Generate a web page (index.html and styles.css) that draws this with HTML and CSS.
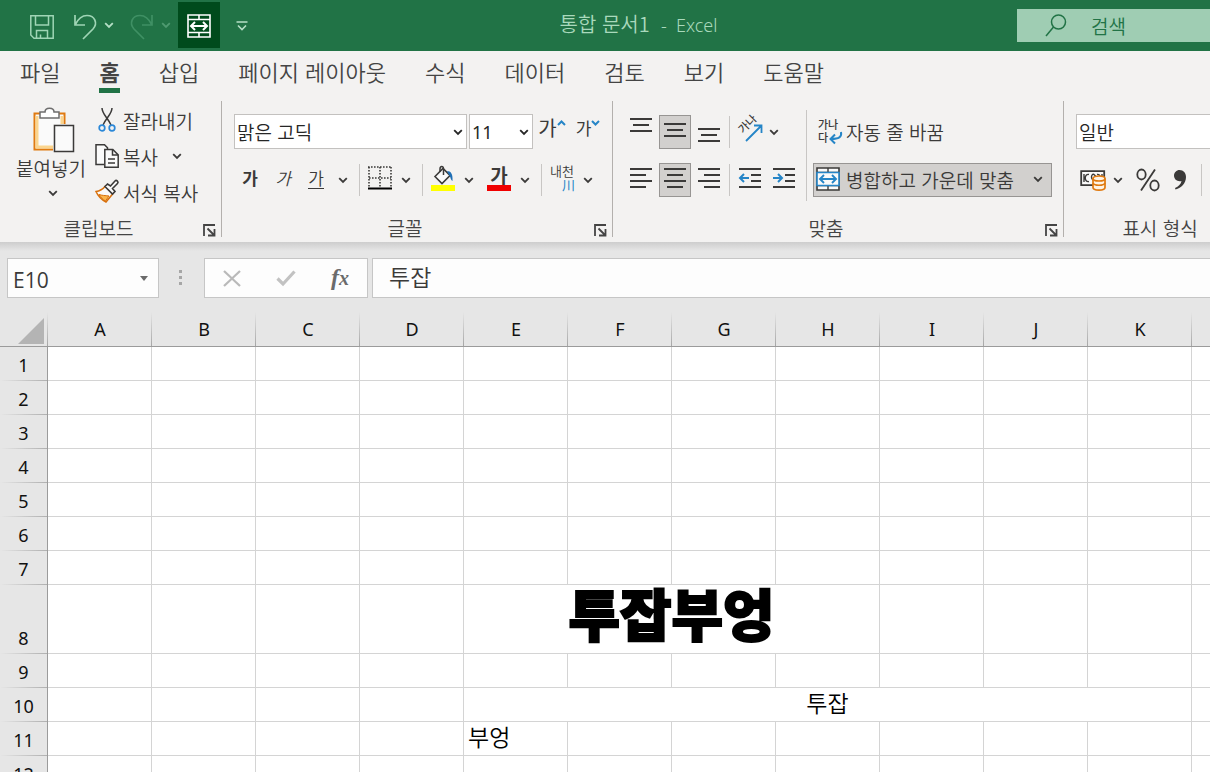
FILE: index.html
```html
<!DOCTYPE html>
<html lang="ko">
<head>
<meta charset="utf-8">
<title>통합 문서1 - Excel</title>
<link rel="stylesheet" href="styles.css">
</head>
<body>
<svg class="symbols" aria-hidden="true">
  <symbol id="chev" viewBox="0 0 10 10"><path d="M1.2 3.2 5 7l3.800-3.800" fill="none" stroke="currentColor" stroke-width="1.8"/></symbol>
  <symbol id="launch" viewBox="0 0 13 13"><path d="M1 12V1h11M4.500 4.500l6 6M11.500 5v6.500H5" fill="none" stroke="currentColor" stroke-width="1.800"/></symbol>
</svg>
<div class="app">
  <header class="titlebar">
    <div class="quick">
      <button class="q save" aria-label="저장"><svg width="24" height="24" viewBox="0 0 24 24" fill="none" stroke="currentColor" stroke-width="1.500"><path d="M.8.8h22.400v22.400H4L.8 20zM5.500.8v9.200h13V.8M6.500 23v-7.500h11V23M10.500 23v-3.500"/></svg></button>
      <button class="q undo" aria-label="실행 취소"><svg width="24" height="26" viewBox="0 0 24 26" fill="none" stroke="currentColor" stroke-width="1.700"><path d="M2 1v10h10M2 11C5 5 9 1.500 14 1.500c8 0 11 8 6 13.500L10 25"/></svg></button>
      <button class="q chevbtn" aria-label="실행 취소 목록"><svg width="10" height="10"><use href="#chev"/></svg></button>
      <button class="q redo" aria-label="다시 실행"><svg width="24" height="26" viewBox="0 0 24 26" fill="none" stroke="currentColor" stroke-width="1.700"><path d="M22 1v10H12M22 11C19 5 15 1.500 10 1.500c-8 0-11 8-6 13.500L14 25"/></svg></button>
      <button class="q chevbtn dim" aria-label="다시 실행 목록"><svg width="10" height="10"><use href="#chev"/></svg></button>
      <button class="q merged" aria-label="병합하고 가운데 맞춤"><svg width="24" height="24" viewBox="0 0 24 24" fill="none" stroke="currentColor" stroke-width="1.600"><path d="M1 1h22v22H1zM1 5.500h22M1 18.500h22M12 1v4.500M12 18.500V23"/><path d="M4.500 12h15M8 8l-4 4 4 4M16 8l4 4-4 4" stroke-width="2"/></svg></button>
      <button class="q custom" aria-label="빠른 실행 도구 모음 사용자 지정"><svg width="12" height="10" viewBox="0 0 12 10" fill="none" stroke="currentColor" stroke-width="1.600"><path d="M.5 1h11M2 4.500l4 4 4-4"/></svg></button>
    </div>
    <div class="doc">통합 문서1 &nbsp;<span>-&nbsp; Excel</span></div>
    <label class="search"><svg width="22" height="23" viewBox="0 0 22 23" fill="none" stroke="currentColor" stroke-width="1.500"><circle cx="13.500" cy="8" r="7"/><path d="M8.500 13 1 22"/></svg><input type="text" placeholder="검색" aria-label="검색"></label>
  </header>

  <nav class="tabs">
    <a href="#">파일</a><a href="#" class="on">홈</a><a href="#">삽입</a><a href="#">페이지 레이아웃</a><a href="#">수식</a><a href="#">데이터</a><a href="#">검토</a><a href="#">보기</a><a href="#">도움말</a>
  </nav>

  <div class="ribbon">
    <section class="group">
      <div class="body clip">
        <button class="paste">
          <svg class="board" width="42" height="46" viewBox="0 0 42 46" fill="none"><path d="M1.500 6.500h30v36h-30z" fill="#fafafa" stroke="#e07a10" stroke-width="2"/><path d="M4 9v31h17" stroke="#fbd58e" stroke-width="3"/><path d="M29 9v10" stroke="#fbd58e" stroke-width="3"/><path d="M7 11V5h5c0-5 9-5 9 0h5v6z" fill="#fff" stroke="#6d6d6d" stroke-width="1.500"/><path d="M20 17h22v29H20z" fill="#f3f2f1"/><path d="M21.500 18.500h19v26h-19z" fill="#fafafa" stroke="#3b3a39" stroke-width="1.500"/></svg>
          <span>붙여넣기</span>
          <svg class="more" width="10" height="10"><use href="#chev"/></svg>
        </button>
        <div class="cliplist">
          <button class="cmd"><svg width="24" height="24" viewBox="0 0 24 24" fill="none" stroke="#3b3a39" stroke-width="1.500"><path d="M7 0c0 6 6 10 9 17M17 0c0 6-6 10-9 17"/><circle cx="7" cy="20" r="2.800" stroke="#2b88d8" stroke-width="1.700"/><circle cx="17" cy="20" r="2.800" stroke="#2b88d8" stroke-width="1.700"/></svg>잘라내기</button>
          <button class="cmd"><svg width="24" height="24" viewBox="0 0 24 24" fill="#fafafa" stroke="#3b3a39" stroke-width="1.500"><path d="M9 20.500H1V.8h8.500l3 3V20"/><path d="M9.800 5.500h8l5.400 5.400v12.300H9.800z"/><path d="M17.500 5.500v5.500h5.500M13 15h7M13 19h7" fill="none"/></svg>복사<svg class="gapchev" width="10" height="10"><use href="#chev"/></svg></button>
          <button class="cmd"><svg width="24" height="24" viewBox="0 0 24 24" fill="none"><path d="M10.500 6 18 13.500 11 22C7 20 3 16 1 11.500c4-.5 7-2.500 9.500-5.500z" fill="#fafafa" stroke="#d8700c" stroke-width="1.500"/><path d="M4 14.500c3 1 6 1 10 1.500l-3.500 5C7.500 19.500 5.500 17 4 14.500z" fill="#fbb64e" stroke="#d8700c"/><path d="M10 6.500l2.500-2.500 3 2 4.500-5c1.500-1.500 4 1 2.500 2.500l-5 5 2.500 3-2.500 2.500z" fill="#fafafa" stroke="#3b3a39" stroke-width="1.600"/></svg>서식 복사</button>
        </div>
      </div>
      <div class="foot"><span>클립보드</span><button class="launcher" aria-label="클립보드 옵션"><svg width="13" height="13"><use href="#launch"/></svg></button></div>
    </section>

    <section class="group font">
      <div class="body rows">
        <div class="row">
          <div class="pick face"><select aria-label="글꼴"><option>맑은 고딕</option></select><svg width="10" height="10"><use href="#chev"/></svg></div>
          <div class="pick size"><select aria-label="글꼴 크기"><option>11</option></select><svg width="10" height="10"><use href="#chev"/></svg></div>
          <button class="sizebtn grow" aria-label="글꼴 크기 크게">가<svg width="9" height="6" viewBox="0 0 9 6"><path d="M1 5l3.500-3.500L8 5" fill="none" stroke="#2585c7" stroke-width="2"/></svg></button>
          <button class="sizebtn shrink" aria-label="글꼴 크기 작게">가<svg width="9" height="6" viewBox="0 0 9 6"><path d="M1 1l3.500 3.500L8 1" fill="none" stroke="#2585c7" stroke-width="2"/></svg></button>
        </div>
        <div class="row">
          <button class="ga bold" aria-label="굵게">가</button>
          <button class="ga italic" aria-label="기울임꼴">가</button>
          <button class="ga under" aria-label="밑줄"><span>가</span></button>
          <button class="drop" aria-label="밑줄 종류"><svg width="10" height="10"><use href="#chev"/></svg></button>
          <i class="sep"></i>
          <button class="ic" aria-label="테두리"><svg width="24" height="24" viewBox="0 0 24 24" fill="none" stroke="#3b3a39"><path d="M0 1h24M1 12h22" stroke-width="1.600" stroke-dasharray="1.600 1.400"/><path d="M1 1v20M12 1v20M23 1v20" stroke-width="1.600" stroke-dasharray="1.600 1.400"/><path d="M0 22.500h24" stroke="#000" stroke-width="2"/></svg></button>
          <button class="drop" aria-label="테두리 종류"><svg width="10" height="10"><use href="#chev"/></svg></button>
          <i class="sep"></i>
          <button class="ic" aria-label="채우기 색"><svg width="24" height="25" viewBox="0 0 24 25" fill="none"><path d="M0 19h24v6H0z" fill="#ffff00"/><path d="M4 10.500 12 2.500l7 7-8 8z" fill="#fafafa" stroke="#3b3a39" stroke-width="1.600"/><path d="M12.500 9V3c0-3.500-3.500-3-3.500 0v3" stroke="#3b3a39" stroke-width="1.500"/><path d="M16 5c4 0 6 3 5.500 10-2-1-2-5-3.500-6z" fill="#1f6fb5"/></svg></button>
          <button class="drop" aria-label="채우기 색 종류"><svg width="10" height="10"><use href="#chev"/></svg></button>
          <button class="ic color" aria-label="글꼴 색"><span>가</span></button>
          <button class="drop" aria-label="글꼴 색 종류"><svg width="10" height="10"><use href="#chev"/></svg></button>
          <i class="sep"></i>
          <button class="ic ruby" aria-label="윗주 필드"><span>내천</span><b>川</b></button>
          <button class="drop" aria-label="윗주 종류"><svg width="10" height="10"><use href="#chev"/></svg></button>
        </div>
      </div>
      <div class="foot"><span>글꼴</span><button class="launcher" aria-label="글꼴 옵션"><svg width="13" height="13"><use href="#launch"/></svg></button></div>
    </section>

    <section class="group align">
      <div class="body cols">
        <div class="rows">
          <div class="row tools">
            <button aria-label="위쪽 맞춤"><svg width="22" height="24" viewBox="0 0 22 24" stroke="currentColor" stroke-width="2"><path d="M0 1h22M3 7h16M0 13h22"/></svg></button>
            <button class="on" aria-label="가운데 맞춤"><svg width="22" height="24" viewBox="0 0 22 24" stroke="currentColor" stroke-width="2"><path d="M0 6h22M3 12h16M0 18h22"/></svg></button>
            <button aria-label="아래쪽 맞춤"><svg width="22" height="24" viewBox="0 0 22 24" stroke="currentColor" stroke-width="2"><path d="M0 11h22M3 17h16M0 23h22"/></svg></button>
            <i class="sep"></i>
            <button class="orient" aria-label="방향"><svg width="26" height="26" viewBox="0 0 26 26" fill="none"><text x="0" y="0" transform="translate(6 17) rotate(-45)" class="tinyglyph">가나</text><path d="M9 24 24 9M17 8.500h7.500V16" stroke="#2585c7" stroke-width="1.800"/></svg></button>
            <button class="drop" aria-label="방향 종류"><svg width="10" height="10"><use href="#chev"/></svg></button>
          </div>
          <div class="row tools">
            <button aria-label="왼쪽 맞춤"><svg width="22" height="20" viewBox="0 0 22 20" stroke="currentColor" stroke-width="2"><path d="M0 1h22M0 7h16M0 13h22M0 19h16"/></svg></button>
            <button class="on" aria-label="가로 가운데 맞춤"><svg width="22" height="20" viewBox="0 0 22 20" stroke="currentColor" stroke-width="2"><path d="M0 1h22M3 7h16M0 13h22M3 19h16"/></svg></button>
            <button aria-label="오른쪽 맞춤"><svg width="22" height="20" viewBox="0 0 22 20" stroke="currentColor" stroke-width="2"><path d="M0 1h22M6 7h16M0 13h22M6 19h16"/></svg></button>
            <i class="sep"></i>
            <button aria-label="내어쓰기"><svg width="22" height="20" viewBox="0 0 22 20" fill="none" stroke="currentColor" stroke-width="2"><path d="M0 1h22M12 7h10M12 13h10M0 19h22"/><path d="M1 10h9M5 6l-4 4 4 4" stroke="#2585c7"/></svg></button>
            <button aria-label="들여쓰기"><svg width="22" height="20" viewBox="0 0 22 20" fill="none" stroke="currentColor" stroke-width="2"><path d="M0 1h22M12 7h10M12 13h10M0 19h22"/><path d="M0 10h9M5 6l4 4-4 4" stroke="#2585c7"/></svg></button>
          </div>
        </div>
        <i class="tall"></i>
        <div class="rows wide">
          <button class="wrapbtn"><svg width="26" height="26" viewBox="0 0 26 26" fill="none"><text x="0" y="10" class="tinyglyph">가나</text><text x="0" y="23" class="tinyglyph">다</text><path d="M23 13c1 5-2 7-10 7M17 15.500 12.500 20l4.500 4.500" stroke="#2585c7" stroke-width="2"/></svg>자동 줄 바꿈</button>
          <button class="mergebtn"><svg width="24" height="24" viewBox="0 0 24 24" fill="#fafafa"><path d="M1 1h22v22H1z" stroke="#3b3a39" stroke-width="1.600"/><path d="M1 5.500h22M1 18.500h22M12 1v4.500M12 18.500V23" stroke="#3b3a39" stroke-width="1.400"/><path d="M1 5.500h22v13H1z" stroke="#2585c7" stroke-width="1.600"/><path d="M4.500 12h15M8 8l-4 4 4 4M16 8l4 4-4 4" fill="none" stroke="#2585c7" stroke-width="1.900"/></svg><span>병합하고 가운데 맞춤</span><svg width="10" height="10"><use href="#chev"/></svg></button>
        </div>
      </div>
      <div class="foot"><span>맞춤</span><button class="launcher" aria-label="맞춤 옵션"><svg width="13" height="13"><use href="#launch"/></svg></button></div>
    </section>

    <section class="group number">
      <div class="body rows">
        <div class="row"><div class="pick"><select aria-label="표시 형식"><option>일반</option></select></div></div>
        <div class="row">
          <button class="money" aria-label="회계 표시 형식"><svg width="26" height="22" viewBox="0 0 26 22" fill="none"><path d="M1.200 2.200h23v14h-23z" fill="#fafafa" stroke="#3b3a39" stroke-width="1.800"/><path d="M9 5.500c-5-1-5 8 0 7M4 5v8M15 11c-5 1-4-7-1-5.500 1.500 1 2 2.500 1.500 4M17 5.500c2-.5 3 1 3 2.500M22 5v4" stroke="#3b3a39" stroke-width="1.400"/><path d="M13 9.500v9c0 3.500 12 3.500 12 0v-9" fill="#fff4e5" stroke="#e07a10" stroke-width="1.700"/><ellipse cx="19" cy="9.500" rx="6" ry="2.500" fill="#fff4e5" stroke="#e07a10" stroke-width="1.700"/><path d="M13 14c1 3 11 3 12 0" stroke="#e07a10" stroke-width="1.700"/></svg></button>
          <button class="drop" aria-label="회계 종류"><svg width="10" height="10"><use href="#chev"/></svg></button>
          <button class="pct" aria-label="백분율 스타일"><svg width="24" height="24" viewBox="0 0 24 24" fill="none" stroke="currentColor" stroke-width="1.800"><ellipse cx="5.500" cy="6.500" rx="4.200" ry="5"/><ellipse cx="18.500" cy="17.500" rx="4.200" ry="5"/><path d="M19 1.500 5 22.500"/></svg></button>
          <button class="comma" aria-label="쉼표 스타일"><svg width="12" height="20" viewBox="0 0 12 20"><path d="M5.500 0C9.500 0 12 3 12 7c0 6-4.500 11-10.500 12.500L1 18c3.500-1.500 6-4 6.500-7C3.500 12 0 9.500 0 5.500 0 2.500 2.500 0 5.500 0z" fill="currentColor"/></svg></button>
          <i class="sep"></i>
        </div>
      </div>
      <div class="foot"><span>표시 형식</span></div>
    </section>
  </div>

  <div class="formula">
    <div class="namebox"><input type="text" value="E10" aria-label="이름 상자"><svg width="8" height="5" viewBox="0 0 8 5"><path d="M0 0h8L4 5z" fill="#6b6b6b"/></svg></div>
    <svg class="dots" width="3" height="16" viewBox="0 0 3 16"><path d="M0 0h3v3H0zM0 6h3v3H0zM0 12h3v3H0z" fill="#a6a6a6"/></svg>
    <div class="fbtns">
      <button aria-label="취소"><svg width="18" height="17" viewBox="0 0 18 17" fill="none" stroke="#b9b9b9"><path d="M1 1l16 15" stroke-width="2.200"/><path d="M17 1 1 16" stroke-width="2.200"/></svg></button>
      <button aria-label="입력"><svg width="20" height="17" viewBox="0 0 20 17" fill="none" stroke="#c2c2c2" stroke-width="3.200"><path d="M1.500 8.500 7 14 18.500 1.500"/></svg></button>
      <button class="fx" aria-label="함수 삽입">f<small>x</small></button>
    </div>
    <input class="fline" type="text" value="투잡" aria-label="수식 입력줄">
  </div>

  <main class="sheet">
    <table>
      <colgroup><col class="rowhead"><col><col><col><col><col><col><col><col><col><col><col><col></colgroup>
      <thead><tr><th class="corner"><svg width="26" height="26" viewBox="0 0 26 26"><path d="M26 0v26H0z" fill="#b4b4b4"/></svg></th><th>A</th><th>B</th><th>C</th><th>D</th><th>E</th><th>F</th><th>G</th><th>H</th><th>I</th><th>J</th><th>K</th><th></th></tr></thead>
      <tbody>
        <tr><th>1</th><td></td><td></td><td></td><td></td><td></td><td></td><td></td><td></td><td></td><td></td><td></td><td></td></tr>
        <tr><th>2</th><td></td><td></td><td></td><td></td><td></td><td></td><td></td><td></td><td></td><td></td><td></td><td></td></tr>
        <tr><th>3</th><td></td><td></td><td></td><td></td><td></td><td></td><td></td><td></td><td></td><td></td><td></td><td></td></tr>
        <tr><th>4</th><td></td><td></td><td></td><td></td><td></td><td></td><td></td><td></td><td></td><td></td><td></td><td></td></tr>
        <tr><th>5</th><td></td><td></td><td></td><td></td><td></td><td></td><td></td><td></td><td></td><td></td><td></td><td></td></tr>
        <tr><th>6</th><td></td><td></td><td></td><td></td><td></td><td></td><td></td><td></td><td></td><td></td><td></td><td></td></tr>
        <tr><th>7</th><td></td><td></td><td></td><td></td><td></td><td></td><td></td><td></td><td></td><td></td><td></td><td></td></tr>
        <tr class="big"><th>8</th><td></td><td></td><td></td><td></td><td colspan="4" class="headline">투잡부엉</td><td></td><td></td><td></td><td></td></tr>
        <tr><th>9</th><td></td><td></td><td></td><td></td><td></td><td></td><td></td><td></td><td></td><td></td><td></td><td></td></tr>
        <tr><th>10</th><td></td><td></td><td></td><td></td><td colspan="7" class="mid">투잡</td><td></td></tr>
        <tr><th>11</th><td></td><td></td><td></td><td></td><td>부엉</td><td></td><td></td><td></td><td></td><td></td><td></td><td></td></tr>
        <tr><th>12</th><td></td><td></td><td></td><td></td><td></td><td></td><td></td><td></td><td></td><td></td><td></td><td></td></tr>
      </tbody>
    </table>
  </main>
</div>
</body>
</html>
```
FILE: styles.css
```css
* { box-sizing: border-box; }
body {
  margin: 0;
  font-family: "Noto Sans CJK KR", sans-serif;
  font-weight: 350;
  font-size: 19px;
  color: #3b3a39;
  background: #e6e6e6;
}
button, input, select {
  font: inherit;
  color: inherit;
  margin: 0;
  padding: 0;
  border: 0;
  border-radius: 0;
  background: none;
  outline: none;
}
button { display: flex; align-items: center; justify-content: center; white-space: nowrap; }
svg { display: block; flex: none; overflow: visible; }
.symbols { position: absolute; width: 0; height: 0; }
.app { height: 100vh; display: flex; flex-direction: column; overflow: hidden; }

/* Title bar */
.titlebar { flex: none; display: flex; height: 51px; background: #217346; color: #9fd5b5; }
.quick { display: flex; flex: none; padding-left: 24px; height: 50px; align-items: center; }
.q { height: 46px; }
.save { width: 36px; padding-top: 4px; }
.undo, .redo { width: 30px; padding-top: 4px; }
.undo { margin-left: 10px; }
.redo { margin-left: 9px; color: #3f9064; }
.chevbtn { width: 18px; color: #b5dfc6; }
.dim { color: #4f9a71; }
.merged { width: 42px; margin-left: 3px; padding-top: 2px; background: #004b1c; color: #fff; }
.custom { width: 36px; margin-left: 4px; padding-top: 2px; color: #b5dfc6; }
.doc { flex: 1; text-align: center; font-size: 20px; line-height: 48px; color: #a9d9bc; white-space: nowrap; }
.doc span { font-family: "Noto Sans", sans-serif; font-size: 18px; }
.search { flex: none; display: flex; align-items: center; gap: 24px; width: 193px; height: 33px; margin-top: 9px; padding-left: 28px; background: #9fcdb3; color: #217346; overflow: hidden; }
.search input { flex: 1; min-width: 0; line-height: 30px; }
.search input::placeholder { color: #217346; opacity: 1; }

/* Tabs */
.tabs { flex: none; display: flex; gap: 39px; padding: 0 20px; height: 50px; background: #f3f2f1; }
.tabs a { height: 42px; line-height: 40px; font-size: 22px; color: #444; text-decoration: none; white-space: nowrap; }
.tabs .on { font-weight: 700; border-bottom: 5px solid #217346; }

/* Ribbon */
.ribbon { flex: none; display: flex; padding-bottom: 5px; background: #f3f2f1; overflow: hidden; }
.group { flex: none; display: flex; flex-direction: column; border-right: 1px solid #b3b0ad; }
.group:first-child { width: 222px; }
.body { height: 112px; }
.foot { display: flex; height: 24px; line-height: 30px; color: #444; }
.foot span { flex: 1; text-align: center; }
.launcher { width: 24px; padding-top: 10px; }
.clip { display: flex; padding-left: 12px; }
.paste { width: 78px; flex-direction: column; justify-content: flex-start; padding-top: 6px; }
.paste span { line-height: 30px; }
.board { margin-left: 6px; }
.more { margin: 5px 0 0 4px; }
.cliplist { padding: 1px 0 0 5px; }
.cmd { height: 36px; gap: 4px; justify-content: flex-start; }
.gapchev { margin-left: 10px; }

.rows { display: flex; flex-direction: column; gap: 14px; padding-top: 13px; }
.row { display: flex; flex: none; height: 35px; align-items: center; }
.row + .row { height: 34px; }
.font .rows, .number .rows { padding-left: 12px; }
.font { width: 391px; }
.pick { display: grid; height: 35px; background: #fff; border: 1px solid #c3c1bf; align-items: center; color: #262626; }
.pick > * { grid-area: 1 / 1; }
.pick select { width: 100%; height: 33px; padding-left: 2px; appearance: none; }
.pick svg { justify-self: end; margin-right: 3px; pointer-events: none; }
.face { width: 233px; margin-right: 2px; }
.size { width: 64px; font-family: "Noto Sans", sans-serif; font-weight: 400; font-size: 18px; }
.sizebtn { height: 34px; align-items: flex-start; font-size: 20px; font-weight: 400; line-height: 26px; }
.sizebtn svg { margin-top: 5px; }
.grow { width: 34px; margin-left: 2px; }
.shrink { width: 34px; margin-left: 2px; font-size: 17px; }
.ga { width: 32px; height: 34px; font-size: 17px; line-height: 26px; padding-bottom: 4px; }
.bold { font-weight: 700; }
.italic { font-style: italic; width: 34px; }
.under span { line-height: 20px; border-bottom: 1px solid #3b3a39; }
.drop { width: 22px; height: 34px; }
.sep { width: 1px; height: 32px; margin: 0 5px; background: #c8c6c4; }
.ic { width: 30px; height: 34px; padding-bottom: 4px; }
.color { margin-left: 4px; font-weight: 700; }
.color span { width: 24px; line-height: 20px; border-bottom: 6px solid #f00000; }
.ruby { flex-direction: column; font-size: 13px; line-height: 14px; }
.ruby b { align-self: flex-end; font-weight: 400; color: #2585c7; margin-right: 2px; line-height: 14px; }

.cols { display: flex; padding-left: 12px; }
.tools { gap: 2px; }
.tools button { width: 32px; height: 34px; padding-bottom: 4px; }
.tools .on { background: #d2d0ce; border: 1px solid #979593; }
.tools .sep { margin: 0 2px; }
.tools .drop { width: 12px; padding: 0; }
.tinyglyph { font-size: 11px; font-weight: 500; fill: #3b3a39; }
.tall { width: 1px; height: 91px; margin: 9px 6px 0; background: #c8c6c4; }
.wrapbtn { height: 35px; padding-left: 5px; gap: 2px; justify-content: flex-start; }
.mergebtn { height: 34px; width: 239px; gap: 6px; padding: 0 8px 2px 2px; justify-content: flex-start; background: #d2d0ce; border: 1px solid #979593; }
.mergebtn span { flex: 1; text-align: left; }
.wide { padding-right: 11px; }
.number { width: 192px; border-right: 0; }
.number .pick { flex: 1; }
.money { width: 31px; padding-left: 3px; height: 34px; }
.pct { width: 34px; padding-left: 4px; }
.comma { width: 34px; }
.number .sep { margin-left: 4px; }

/* Formula bar */
.formula { flex: none; display: flex; align-items: center; padding: 16px 0 14px 7px; background: linear-gradient(#cdcdcd, #e6e6e6 9px); }
.namebox { display: grid; width: 152px; height: 40px; align-items: center; background: #fdfdfd; border: 1px solid #c6c6c6; font-family: "Open Sans", sans-serif; font-size: 21px; font-weight: 400; }
.namebox > * { grid-area: 1 / 1; }
.namebox input { width: 100%; height: 38px; padding: 4px 0 0 5px; }
.namebox svg { justify-self: end; margin-right: 10px; }
.dots { margin: 0 22px 0 20px; }
.fbtns { display: flex; height: 40px; margin-right: 4px; background: #fdfdfd; border: 1px solid #c6c6c6; }
.fbtns button { width: 54px; }
.fbtns .fx { font-family: "Liberation Serif", serif; font-style: italic; font-weight: 700; font-size: 24px; color: #6b6b6b; align-items: baseline; line-height: 36px; }
.fx small { font-size: 20px; }
.fline { flex: 1; min-width: 0; height: 40px; padding: 0 0 4px 16px; background: #fdfdfd; border: 1px solid #c6c6c6; border-right: 0; font-size: 23px; }

/* Sheet */
.sheet { flex: 1; min-height: 0; overflow: hidden; background: #fff; }
table { width: 1296px; table-layout: fixed; border-collapse: separate; border-spacing: 0; }
col { width: 104px; }
.rowhead { width: 48px; }
th { font-family: "Noto Sans", sans-serif; font-weight: 400; font-size: 18px; color: #111; padding: 0; }
thead th { height: 35px; line-height: 34px; border-bottom: 1px solid #9b9b9b; background: linear-gradient(#e6e6e6, #a6a6a6) right / 1px 100% no-repeat #e6e6e6; }
.corner svg { margin: 4px 0 0 18px; }
tbody th { height: 34px; line-height: 32px; vertical-align: bottom; border-right: 1px solid #9b9b9b; background: linear-gradient(90deg, #e6e6e6, #b0b0b0) bottom / 100% 1px no-repeat #e6e6e6; }
td { padding: 0 4px; border-right: 1px solid #d4d4d4; border-bottom: 1px solid #d4d4d4; font-size: 23px; line-height: 28px; vertical-align: top; color: #000; white-space: nowrap; }
.big th, .big td { height: 69px; }
.headline { text-align: center; font-size: 56px; line-height: 54px; font-weight: 900; -webkit-text-stroke: 2px #000; }
.mid { text-align: center; }
```
